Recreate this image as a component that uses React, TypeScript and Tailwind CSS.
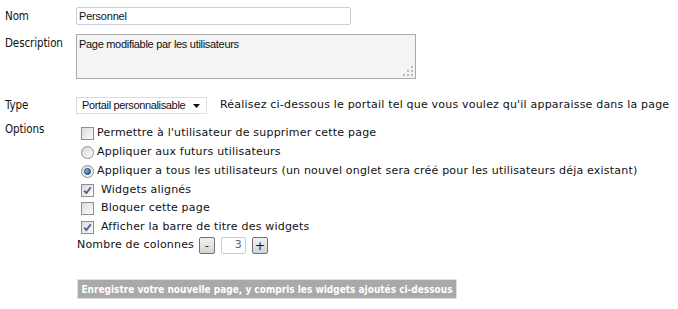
import React from "react";

const V = { fontFamily: '"DejaVu Sans", Verdana, sans-serif' };
const A = { fontFamily: '"Liberation Sans", Arial, sans-serif' };
const C = { fontFamily: '"DejaVu Sans Condensed", "DejaVu Sans", Tahoma, sans-serif' };

function Check({ checked }: { checked?: boolean }) {
  return (
    <span className="inline-flex h-[13px] w-[13px] items-center justify-center border border-[#8e8f8f] bg-gradient-to-br from-[#dcdcdc] to-[#fbfbfb] shrink-0">
      {checked && (
        <svg width="9" height="9" viewBox="0 0 9 9">
          <path d="M1.2 4.6 L3.4 7 L7.8 1.3" fill="none" stroke="#4a5f97" strokeWidth="1.8" />
        </svg>
      )}
    </span>
  );
}

function Radio({ checked }: { checked?: boolean }) {
  return (
    <span className="inline-flex h-[13px] w-[13px] items-center justify-center rounded-full border border-[#8e8f8f] bg-gradient-to-br from-[#d6d6d6] to-[#fdfdfd] shrink-0">
      {checked && <span className="h-[7px] w-[7px] rounded-full bg-gradient-to-br from-[#9fd3f5] to-[#124f8d] border border-[#16406e]" />}
    </span>
  );
}

export default function App() {
  return (
    <div className="w-[678px] h-[309px] bg-white text-[11px] text-[#111] tracking-[0.2px]" style={V}>
      <div className="grid grid-cols-[71px_1fr] pl-[5px] pt-[7px]">
        {/* Nom */}
        <div className="pt-[2px] leading-[14px] text-[11.5px] tracking-[-0.1px]" style={C}>Nom</div>
        <div>
          <div className="h-[18px] w-[275px] border border-[#c9cfd6] rounded-[2px] px-[2px] leading-[16px] text-[11px] tracking-[-0.2px]" style={A}>
            Personnel
          </div>
        </div>

        {/* Description */}
        <div className="pt-[11px] leading-[14px] text-[11.5px] tracking-[-0.1px]" style={C}>Description</div>
        <div className="pt-[9px]">
          <div className="relative h-[45px] w-[340px] border border-[#aaaaaa] bg-[#f4f4f4] px-[2px] pt-[2px] leading-[14px] text-[11px] tracking-[-0.3px]" style={A}>
            Page modifiable par les utilisateurs
            <svg className="absolute right-[2px] bottom-[2px]" width="10" height="10" viewBox="0 0 10 10">
              <rect x="8" y="0" width="2" height="2" fill="#bbb" />
              <rect x="4" y="4" width="2" height="2" fill="#bbb" />
              <rect x="8" y="4" width="2" height="2" fill="#bbb" />
              <rect x="0" y="8" width="2" height="2" fill="#bbb" />
              <rect x="4" y="8" width="2" height="2" fill="#bbb" />
              <rect x="8" y="8" width="2" height="2" fill="#bbb" />
            </svg>
          </div>
        </div>

        {/* Type */}
        <div className="pt-[19px] leading-[14px] text-[11.5px] tracking-[-0.1px]" style={C}>Type</div>
        <div className="pt-[18px] flex items-center">
          <div className="flex h-[17px] w-[131px] items-center justify-between border border-[#dddddd] pl-[5px] pr-[6px] text-[11px] tracking-[-0.35px] whitespace-nowrap" style={A}>
            <span>Portail personnalisable</span>
            <svg width="7" height="4" viewBox="0 0 7 4"><path d="M0 0h7L3.5 4z" fill="#111" /></svg>
          </div>
          <span className="ml-[13px] whitespace-nowrap">Réalisez ci-dessous le portail tel que vous voulez qu'il apparaisse dans la page</span>
        </div>

        {/* Options */}
        <div className="pt-[8px] leading-[14px] text-[11.5px] tracking-[-0.1px]" style={C}>Options</div>
        <div className="pt-[10px] flex flex-col">
          <label className="flex items-center h-[19px] pl-[5px] gap-[2px]"><Check /><span className="ml-[1px] whitespace-nowrap">Permettre à l'utilisateur de supprimer cette page</span></label>
          <label className="flex items-center h-[19px] pl-[5px] gap-[2px]"><Radio /><span className="ml-[1px] whitespace-nowrap">Appliquer aux futurs utilisateurs</span></label>
          <label className="flex items-center h-[19px] pl-[5px] gap-[2px]"><Radio checked /><span className="ml-[1px] whitespace-nowrap">Appliquer a tous les utilisateurs (un nouvel onglet sera créé pour les utilisateurs déja existant)</span></label>
          <label className="flex items-center h-[18px] pl-[5px] gap-[7px]"><Check checked /><span>Widgets alignés</span></label>
          <label className="flex items-center h-[19px] pl-[5px] gap-[7px]"><Check /><span>Bloquer cette page</span></label>
          <label className="flex items-center h-[18px] pl-[5px] gap-[7px]"><Check checked /><span>Afficher la barre de titre des widgets</span></label>
          <div className="flex items-center h-[19px] pl-[1px]">
            <span className="whitespace-nowrap">Nombre de colonnes</span>
            <span className="ml-[5px] flex h-[17px] w-[16px] items-center justify-center rounded-[2px] border border-[#707070] bg-gradient-to-b from-[#f2f2f2] to-[#d4d4d4] text-[11px] leading-none">-</span>
            <span className="ml-[6px] flex h-[17px] w-[25px] items-center justify-end rounded-[2px] border border-[#cccccc] pr-[3px] text-[#666]">3</span>
            <span className="ml-[6px] flex h-[17px] w-[16px] items-center justify-center rounded-[2px] border border-[#707070] bg-gradient-to-b from-[#f2f2f2] to-[#d4d4d4] text-[12px] leading-none">+</span>
          </div>
          <div className="mt-[24px] pl-[1px]">
            <div className="inline-flex h-[20px] w-[380px] items-center justify-center border border-[#e0e0e0] bg-[#a9a9a9] text-[10px] font-bold text-white whitespace-nowrap tracking-normal" style={C}>
              Enregistre votre nouvelle page, y compris les widgets ajoutés ci-dessous
            </div>
          </div>
        </div>
      </div>
    </div>
  );
}
